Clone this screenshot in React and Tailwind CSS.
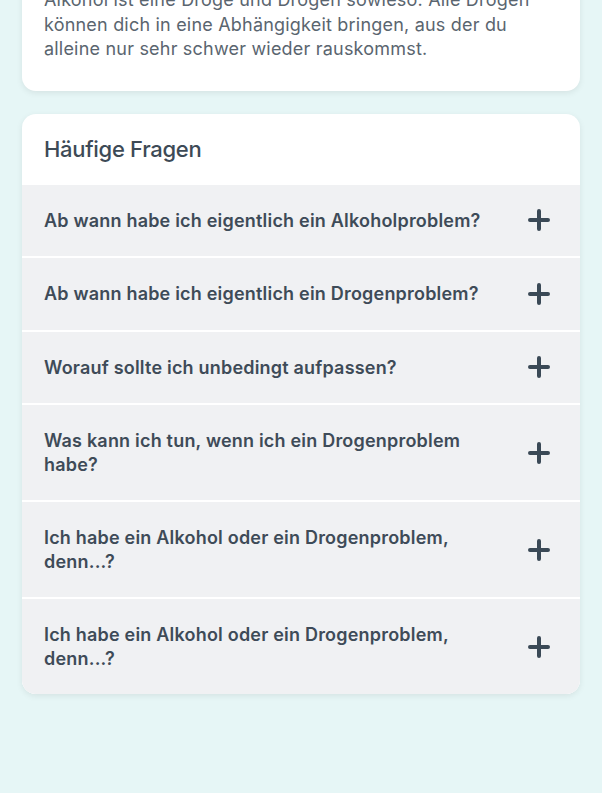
import React from "react";

const questions = [
  "Ab wann habe ich eigentlich ein Alkoholproblem?",
  "Ab wann habe ich eigentlich ein Drogenproblem?",
  "Worauf sollte ich unbedingt aufpassen?",
  "Was kann ich tun, wenn ich ein Drogenproblem habe?",
  "Ich habe ein Alkohol oder ein Drogenproblem, denn...?",
  "Ich habe ein Alkohol oder ein Drogenproblem, denn...?",
];

function Plus() {
  return (
    <svg width="22" height="22" viewBox="0 0 22 22" className="shrink-0">
      <path d="M11 2v18M2 11h18" stroke="#3a4956" strokeWidth="4" strokeLinecap="round" />
    </svg>
  );
}

export default function App() {
  return (
    <div
      className="min-h-[793px] w-full bg-[#e6f6f6] overflow-hidden px-[22px] pb-10"
      style={{ fontFamily: "Inter, 'Noto Sans', sans-serif" }}
    >
      <div className="-mt-[40px] rounded-[14px] bg-white px-[22px] pt-[28px] pb-[29px] shadow-[0_2px_6px_rgba(0,0,0,0.08)]">
        <p className="text-[18px] leading-[24.5px] tracking-[0.2px] text-[#5a656f]">
          Alkohol ist eine Droge und Drogen sowieso. Alle Drogen
          <br />
          können dich in eine Abhängigkeit bringen, aus der du
          <br />
          alleine nur sehr schwer wieder rauskommst.
        </p>
      </div>

      <div className="mt-[23px] overflow-hidden rounded-[14px] bg-white shadow-[0_2px_6px_rgba(0,0,0,0.08)]">
        <div className="flex h-[71px] items-center px-[22px]">
          <h2 className="text-[22px] font-medium tracking-[-0.3px] text-[#3d4a56]">Häufige Fragen</h2>
        </div>
        <div className="flex flex-col gap-[2px] bg-white">
          {questions.map((q, i) => (
            <div key={i} className="flex items-center justify-between gap-6 bg-[#f0f1f3] py-6 pl-[22px] pr-[30px]">
              <span className="max-w-[450px] text-[18px] font-semibold leading-[23.5px] tracking-[0.2px] text-[#3e4b58]">
                {q}
              </span>
              <Plus />
            </div>
          ))}
        </div>
      </div>
    </div>
  );
}
